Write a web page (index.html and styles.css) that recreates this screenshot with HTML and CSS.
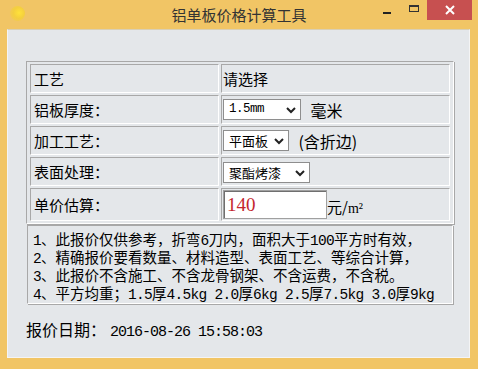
FILE: index.html
```html
<!DOCTYPE html>
<html lang="zh-CN">
<head>
    <meta charset="UTF-8">
    <meta name="viewport" content="width=device-width, initial-scale=1.0">
    <title>铝单板价格计算工具</title>
    <link rel="stylesheet" href="styles.css">
</head>
<body>
    <div class="window">
        <!-- 标题栏 -->
        <div class="titlebar">
            <div class="app-icon"></div>
            <div class="title">铝单板价格计算工具</div>
            <div class="controls">
                <span class="btn-min"><i></i></span>
                <span class="btn-max"><i></i></span>
                <span class="btn-close">
                    <svg width="10" height="10" viewBox="0 0 10 10"><path d="M1 1 L9 9 M9 1 L1 9" stroke="#fff" stroke-width="2"/></svg>
                </span>
            </div>
        </div>

        <div class="client">
            <table class="calc">
                <tr>
                    <td class="label">工艺</td>
                    <td class="value">请选择</td>
                </tr>
                <tr>
                    <td class="label">铝板厚度：</td>
                    <td class="value">
                        <span class="combo w-thick">
                            <select id="thick">
                                <option>1.5mm</option>
                                <option>2.0mm</option>
                                <option>2.5mm</option>
                                <option>3.0mm</option>
                            </select>
                            <svg class="arrow" width="10" height="7" viewBox="0 0 10 7"><path d="M1 1 L5 5 L9 1" fill="none" stroke="#222" stroke-width="2"/></svg>
                        </span>
                        <span class="unit">毫米</span>
                    </td>
                </tr>
                <tr>
                    <td class="label">加工工艺：</td>
                    <td class="value">
                        <span class="combo w-craft">
                            <select id="craft">
                                <option>平面板</option>
                                <option>弧形板</option>
                            </select>
                            <svg class="arrow" width="10" height="7" viewBox="0 0 10 7"><path d="M1 1 L5 5 L9 1" fill="none" stroke="#222" stroke-width="2"/></svg>
                        </span>
                        <span class="unit">(含折边)</span>
                    </td>
                </tr>
                <tr>
                    <td class="label">表面处理：</td>
                    <td class="value">
                        <span class="combo w-surface">
                            <select id="surface">
                                <option>聚酯烤漆</option>
                                <option>氟碳喷涂</option>
                            </select>
                            <svg class="arrow" width="10" height="7" viewBox="0 0 10 7"><path d="M1 1 L5 5 L9 1" fill="none" stroke="#222" stroke-width="2"/></svg>
                        </span>
                    </td>
                </tr>
                <tr class="row-price">
                    <td class="label">单价估算：</td>
                    <td class="value">
                        <div class="price-wrap">
                            <input type="text" class="price" id="price" value="140">
                            <span class="price-unit">元/<span class="m2">m²</span></span>
                        </div>
                    </td>
                </tr>
            </table>

            <div class="notes">
                <p><span class="en">1</span>、此报价仅供参考，折弯<span class="en">6</span>刀内，面积大于<span class="en">100</span>平方时有效，</p>
                <p><span class="en">2</span>、精确报价要看数量、材料造型、表面工艺、等综合计算，</p>
                <p><span class="en">3</span>、此报价不含施工、不含龙骨钢架、不含运费，不含税。</p>
                <p><span class="en">4</span>、平方均重；<span class="en">1.5</span>厚<span class="en">4.5kg 2.0</span>厚<span class="en">6kg 2.5</span>厚<span class="en">7.5kg 3.0</span>厚<span class="en">9kg</span></p>
            </div>

            <div class="date">报价日期：<span class="mono">2016-08-26 15:58:03</span></div>
        </div>
    </div>
</body>
</html>
```

FILE: styles.css
```css
/* Reset básico */
* {
    margin: 0;
    padding: 0;
    box-sizing: border-box;
}

body {
    font-family: "Noto Sans CJK SC", sans-serif;
    color: #000;
    background: #f1c565;
}

.window {
    width: 478px;
    height: 369px;
    background-color: #f1c565;
    display: flex;
    flex-direction: column;
}

/* 标题栏 */
.titlebar {
    height: 29px;
    display: grid;
    grid-template-columns: 1fr auto 1fr;
    align-items: start;
}

.app-icon {
    width: 15px;
    height: 15px;
    margin: 6px 0 0 10px;
    border-radius: 50%;
    background: radial-gradient(circle at 60% 45%, #ffe23a 0, #f4cf3e 45%, #f1c565 100%);
}

.title {
    font-size: 15px;
    line-height: 29px;
    color: #333;
}

.controls {
    justify-self: end;
    display: flex;
    margin-right: 6px;
}

.controls span {
    height: 20px;
    display: flex;
    align-items: center;
    justify-content: center;
}

.btn-min {
    width: 26px;
}

.btn-min i {
    display: block;
    width: 8px;
    height: 2px;
    margin-top: 5px;
    background: #222;
}

.btn-max {
    width: 27px;
}

.btn-max i {
    display: block;
    width: 10px;
    height: 7px;
    margin-top: -3px;
    border: 1px solid #333;
    border-top-width: 2px;
}

.btn-close {
    width: 45px;
    background-color: #c75050;
}

/* 客户区 */
.client {
    flex: 1;
    margin: 0 8px 11px 7px;
    background-color: #e4e7ea;
    border: 1px solid #f4f4f4;
    border-top-color: #d9cfb5;
    padding: 31px 0 0 18px;
}

.calc {
    width: 428px;
    border: 1px solid #a8a8a8;
    border-right-color: #fff;
    border-bottom-color: #fff;
    box-shadow: 1px 1px 0 #a8a8a8;
    border-spacing: 2px;
    padding: 0 1px;
}

.calc td {
    height: 29px;
    border: 1px solid #a8a8a8;
    border-right-color: #fff;
    border-bottom-color: #fff;
    font-size: 15px;
    vertical-align: middle;
    padding: 0 1px;
}

.calc td.label {
    width: 189px;
    padding-left: 3px;
}

.calc .row-price td {
    height: 33px;
}

.value {
    white-space: nowrap;
}

/* 下拉框 */
.combo {
    position: relative;
    display: inline-block;
    vertical-align: middle;
}

.combo select {
    appearance: none;
    -webkit-appearance: none;
    display: block;
    width: 100%;
    height: 21px;
    border: 1px solid #8e8e8e;
    background: #fff;
    font-family: "Noto Sans CJK SC", sans-serif;
    font-size: 13px;
    line-height: 19px;
    padding-left: 5px;
    color: #000;
    outline: none;
}

.combo .arrow {
    position: absolute;
    right: 5px;
    top: 8px;
    pointer-events: none;
}

.w-thick {
    width: 78px;
}

.w-thick select {
    font-family: "Liberation Mono", monospace;
    font-size: 12.5px;
    letter-spacing: -0.5px;
}

.w-craft {
    width: 66px;
}

.w-surface {
    width: 87px;
}

.unit {
    font-size: 16px;
    vertical-align: middle;
    margin-left: 6px;
}

/* 单价 */
.price-wrap {
    display: flex;
    align-items: flex-end;
}

.price {
    width: 104px;
    height: 29px;
    border: 1px solid #a0a0a0;
    box-shadow: inset 1px 1px 0 #6f6f6f;
    background: #fff;
    color: #c4262e;
    font-family: "Liberation Serif", serif;
    font-size: 19px;
    padding: 0 3px;
    outline: none;
}

.price-unit {
    font-size: 15px;
    line-height: 18px;
    margin-bottom: 1px;
}

.m2 {
    font-family: "Liberation Serif", serif;
    font-size: 14px;
}

/* 说明 */
.notes {
    width: 426px;
    height: 79px;
    margin: 1px 0 0 1px;
    border: 1px solid #a8a8a8;
    border-right-color: #fff;
    border-bottom-color: #fff;
    box-shadow: 1px 1px 0 #a8a8a8;
    padding: 5px 0 0 5px;
    font-size: 14.5px;
    line-height: 15px;
    white-space: nowrap;
}

.notes .en {
    font-family: "Liberation Mono", monospace;
    font-size: 14.5px;
    letter-spacing: -0.7px;
}

/* 日期 */
.date {
    margin-top: 15px;
    font-size: 16px;
    line-height: 20px;
}

.mono {
    font-family: "Liberation Mono", monospace;
    font-size: 15px;
    letter-spacing: -1px;
    margin-left: 4px;
}
```
